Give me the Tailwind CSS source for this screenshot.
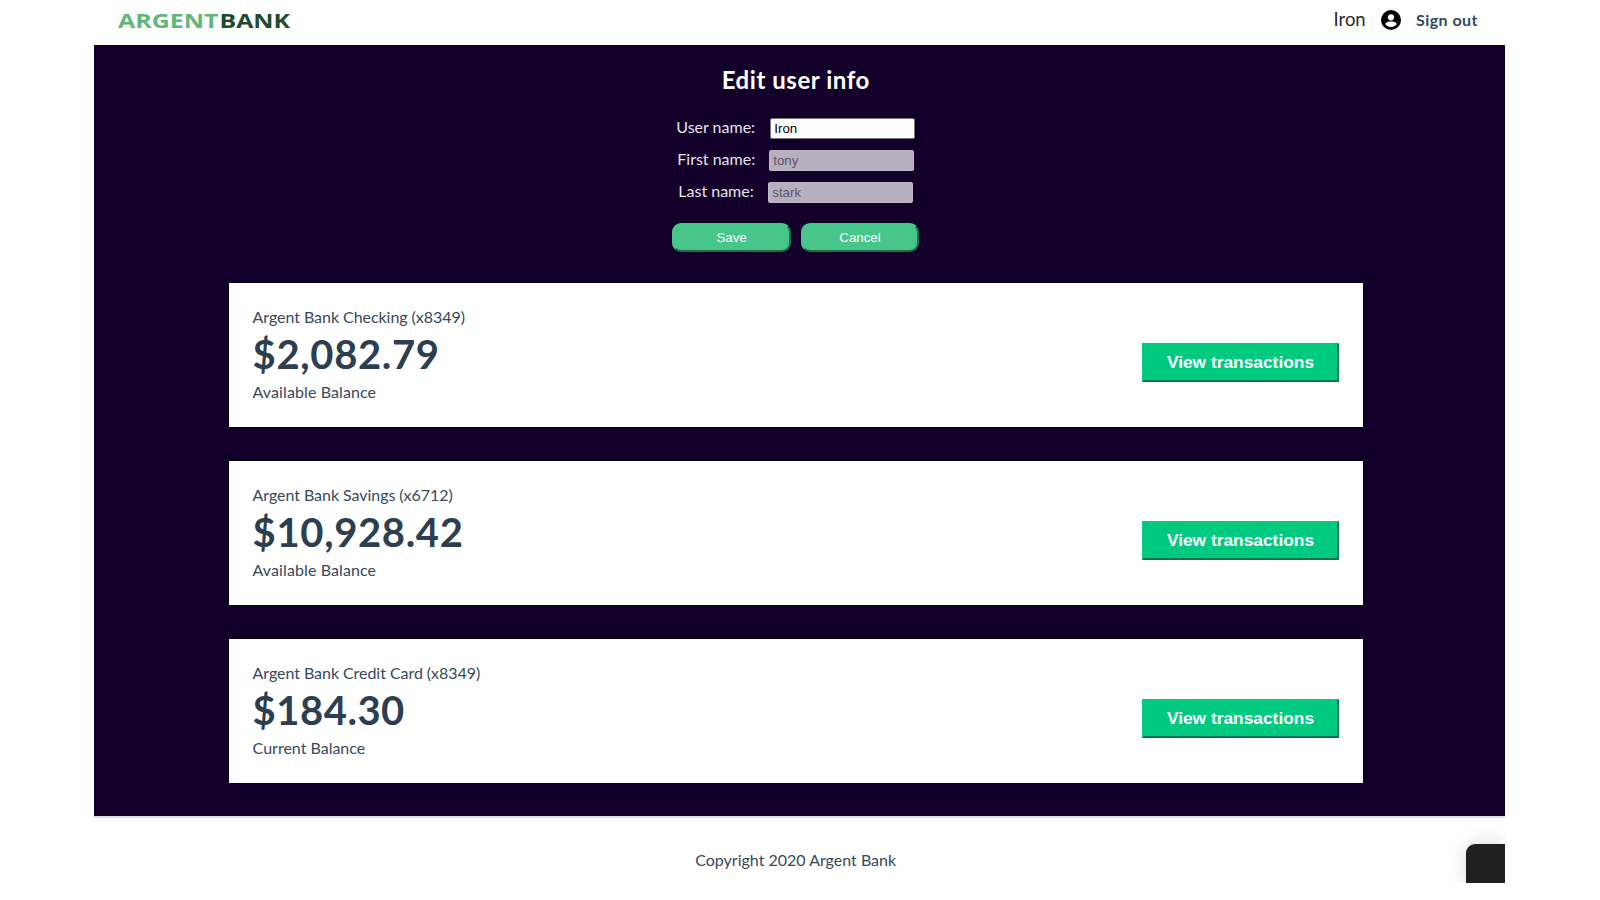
<!DOCTYPE html>
<html lang="en">
<head>
<meta charset="utf-8">
<title>Argent Bank</title>
<script src="https://cdn.jsdelivr.net/npm/@tailwindcss/browser@4"></script>
</head>
<body class="bg-white font-[Lato,sans-serif] text-[#2c3e50] overflow-hidden">
<div class="relative ml-[94.4px] w-[1410.6px] h-[883px] overflow-hidden">
  <nav class="h-[45px] flex items-center justify-between pl-[23.6px] pr-[27px]">
    <svg class="w-[173px] h-[30px]" viewBox="0 0 173 30" font-family="Open Sans, sans-serif" font-weight="700" font-size="20"><text x="0" y="20" textLength="100.5" lengthAdjust="spacingAndGlyphs" fill="#5fb878">ARGENT</text><text x="101.5" y="20" textLength="70.5" lengthAdjust="spacingAndGlyphs" fill="#1f4a30">BANK</text></svg>
    <div class="flex items-center h-10 -mt-[6px]">
      <span class="text-[18.5px] text-[#2a2a2a] w-[47.5px]">Iron</span>
      <svg class="w-5 h-5" viewBox="0 0 20 20"><circle cx="10" cy="10" r="10" fill="#000"/><circle cx="10" cy="7.3" r="3.1" fill="#fff"/><path d="M4.2 14.1c1-2 3-2.6 5.8-2.6s4.8.6 5.8 2.6a7.2 7.2 0 0 1-11.6 0z" fill="#fff"/></svg>
      <a class="ml-[15px] text-[16px] font-bold tracking-[0.45px] w-[62px] whitespace-nowrap text-[#34495e]">Sign out</a>
    </div>
  </nav>
  <main class="h-[773px] bg-[#12002b] border-b-2 border-[#dfdfdf] pl-[134.2px] pr-[142px] flex flex-col">
    <h1 class="mt-[19px] h-[33px] leading-[32px] text-center text-[24px] font-bold text-white tracking-[0.55px]">Edit user info</h1>
    <form class="mt-[18px] flex flex-col text-[16px] text-[#e6e3ea]">
      <div class="h-8 flex justify-center"><label class="w-[94px] leading-6">User name:</label><input class="mt-[3px] w-[145px] h-[21px] bg-white border border-[#767676] rounded-[2px] px-[3px] font-['Liberation_Sans',sans-serif] text-[13.3px] text-black" value="Iron"></div>
      <div class="h-8 flex justify-center"><label class="w-[92px] leading-6">First name:</label><input class="mt-[3px] w-[145px] h-[21px] bg-[#b7afc0] border border-[#c0b9c8] rounded-[2px] px-[3px] font-['Liberation_Sans',sans-serif] text-[13.3px] text-[#5b5760]" value="tony" disabled></div>
      <div class="h-8 flex justify-center"><label class="w-[90px] leading-6">Last name:</label><input class="mt-[3px] w-[145px] h-[21px] bg-[#b7afc0] border border-[#c0b9c8] rounded-[2px] px-[3px] font-['Liberation_Sans',sans-serif] text-[13.3px] text-[#5b5760]" value="stark" disabled></div>
      <div class="mt-3 flex justify-center gap-[10px] font-['Liberation_Sans',sans-serif] text-[13.3px] text-white">
        <button type="button" class="w-[118.5px] h-[29px] rounded-[9px] bg-[#46c68b] border-2 border-t-[#46c68b] border-l-[#46c68b] border-r-[#216b48] border-b-[#216b48] leading-none">Save</button>
        <button type="button" class="w-[118.5px] h-[29px] rounded-[9px] bg-[#46c68b] border-2 border-t-[#46c68b] border-l-[#46c68b] border-r-[#216b48] border-b-[#216b48] leading-none">Cancel</button>
      </div>
    </form>
    <div class="mt-[30.6px] flex flex-col gap-[33.5px]">
      <section class="h-[144.6px] bg-white shadow-[0_0_3px_0_#000] flex items-center justify-between pl-6 pr-6">
        <div class="h-[100.6px]"><h3 class="leading-6 text-[16px] tracking-[-0.05px] text-[#38495b]">Argent Bank Checking (x8349)</h3><p class="leading-[50px] text-[40px] font-bold tracking-[0.65px]">$2,082.79</p><p class="mt-[1.5px] leading-6 text-[16px] tracking-[0.1px] text-[#38495b]">Available Balance</p></div>
        <button class="mt-[15px] w-[197px] h-[39.5px] pb-px bg-[#00ca80] border-2 border-t-[#00ca80] border-l-[#00ca80] border-r-[#08764c] border-b-[#08764c] text-white font-bold text-[17.35px] font-['Liberation_Sans',sans-serif]">View transactions</button>
      </section>
      <section class="h-[144.6px] bg-white shadow-[0_0_3px_0_#000] flex items-center justify-between pl-6 pr-6">
        <div class="h-[100.6px]"><h3 class="leading-6 text-[16px] tracking-[-0.05px] text-[#38495b]">Argent Bank Savings (x6712)</h3><p class="leading-[50px] text-[40px] font-bold tracking-[0.65px]">$10,928.42</p><p class="mt-[1.5px] leading-6 text-[16px] tracking-[0.1px] text-[#38495b]">Available Balance</p></div>
        <button class="mt-[15px] w-[197px] h-[39.5px] pb-px bg-[#00ca80] border-2 border-t-[#00ca80] border-l-[#00ca80] border-r-[#08764c] border-b-[#08764c] text-white font-bold text-[17.35px] font-['Liberation_Sans',sans-serif]">View transactions</button>
      </section>
      <section class="h-[144.6px] bg-white shadow-[0_0_3px_0_#000] flex items-center justify-between pl-6 pr-6">
        <div class="h-[101px]"><h3 class="leading-6 text-[16px] tracking-[-0.05px] text-[#38495b]">Argent Bank Credit Card (x8349)</h3><p class="leading-[50px] text-[40px] font-bold tracking-[0.5px]">$184.30</p><p class="mt-px leading-6 text-[16px] text-[#38495b]">Current Balance</p></div>
        <button class="mt-[15px] w-[197px] h-[39.5px] pb-px bg-[#00ca80] border-2 border-t-[#00ca80] border-l-[#00ca80] border-r-[#08764c] border-b-[#08764c] text-white font-bold text-[17.35px] font-['Liberation_Sans',sans-serif]">View transactions</button>
      </section>
    </div>
  </main>
  <footer class="h-[65px] pt-[30px] pr-[8px] text-center text-[16px] leading-6 text-[#38495b]">Copyright 2020 Argent Bank</footer>
  <div class="absolute right-0 bottom-0 w-[39px] h-[39px] bg-[#202020] rounded-tl-[9px] shadow-[0_0_18px_rgba(0,0,0,0.15)]"></div>
</div>
</body>
</html>
